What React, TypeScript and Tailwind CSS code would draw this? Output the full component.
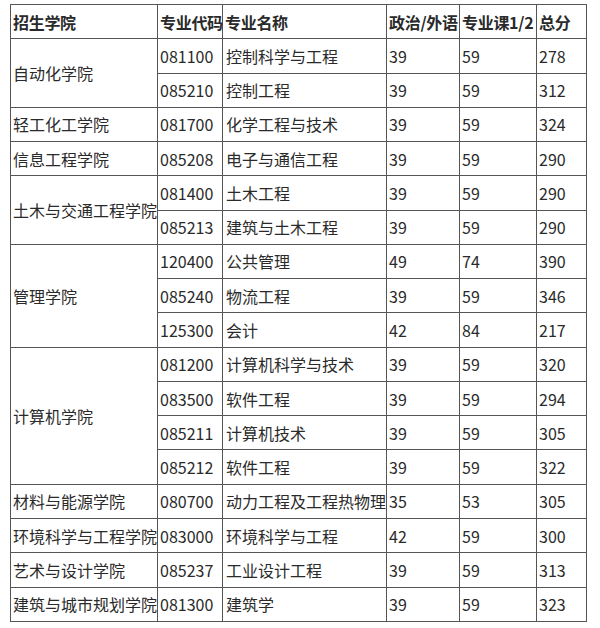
const rows: { school?: string; span?: number; code: string; name: string; a: string; b: string; total: string }[] = [
  { school: '自动化学院', span: 2, code: '081100', name: '控制科学与工程', a: '39', b: '59', total: '278' },
  { code: '085210', name: '控制工程', a: '39', b: '59', total: '312' },
  { school: '轻工化工学院', span: 1, code: '081700', name: '化学工程与技术', a: '39', b: '59', total: '324' },
  { school: '信息工程学院', span: 1, code: '085208', name: '电子与通信工程', a: '39', b: '59', total: '290' },
  { school: '土木与交通工程学院', span: 2, code: '081400', name: '土木工程', a: '39', b: '59', total: '290' },
  { code: '085213', name: '建筑与土木工程', a: '39', b: '59', total: '290' },
  { school: '管理学院', span: 3, code: '120400', name: '公共管理', a: '49', b: '74', total: '390' },
  { code: '085240', name: '物流工程', a: '39', b: '59', total: '346' },
  { code: '125300', name: '会计', a: '42', b: '84', total: '217' },
  { school: '计算机学院', span: 4, code: '081200', name: '计算机科学与技术', a: '39', b: '59', total: '320' },
  { code: '083500', name: '软件工程', a: '39', b: '59', total: '294' },
  { code: '085211', name: '计算机技术', a: '39', b: '59', total: '305' },
  { code: '085212', name: '软件工程', a: '39', b: '59', total: '322' },
  { school: '材料与能源学院', span: 1, code: '080700', name: '动力工程及工程热物理', a: '35', b: '53', total: '305' },
  { school: '环境科学与工程学院', span: 1, code: '083000', name: '环境科学与工程', a: '42', b: '59', total: '300' },
  { school: '艺术与设计学院', span: 1, code: '085237', name: '工业设计工程', a: '39', b: '59', total: '313' },
  { school: '建筑与城市规划学院', span: 1, code: '081300', name: '建筑学', a: '39', b: '59', total: '323' },
];

const spanClass: Record<number, string> = {
  1: 'row-span-1',
  2: 'row-span-2',
  3: 'row-span-3',
  4: 'row-span-4',
};

const cell = 'flex items-center pl-[2px] border-r border-b border-[#555] whitespace-nowrap';

export default function App() {
  return (
    <div
      className="min-h-screen bg-white pl-[10px] pt-[4px] text-[16px] text-[#2a2a2a]"
      style={{ fontFamily: '"Noto Sans CJK SC", "Noto Sans", sans-serif' }}
    >
      <div className="grid w-max grid-cols-[147px_65px_164px_73px_77px_50px] grid-rows-[repeat(18,34.28px)] border-l border-t border-[#555]">
        {['招生学院', '专业代码', '专业名称', '政治/外语', '专业课1/2', '总分'].map((h) => (
          <div key={h} className={`${cell} pl-[1px] font-bold tracking-[-0.3px]`}>
            {h}
          </div>
        ))}
        {rows.map((r, i) => (
          <div key={i} className="contents">
            {r.school && <div className={`${cell} ${spanClass[r.span ?? 1]}`}>{r.school}</div>}
            <div className={cell}>{r.code}</div>
            <div className={`${cell} pl-[3px]`}>{r.name}</div>
            <div className={cell}>{r.a}</div>
            <div className={cell}>{r.b}</div>
            <div className={cell}>{r.total}</div>
          </div>
        ))}
      </div>
    </div>
  );
}
